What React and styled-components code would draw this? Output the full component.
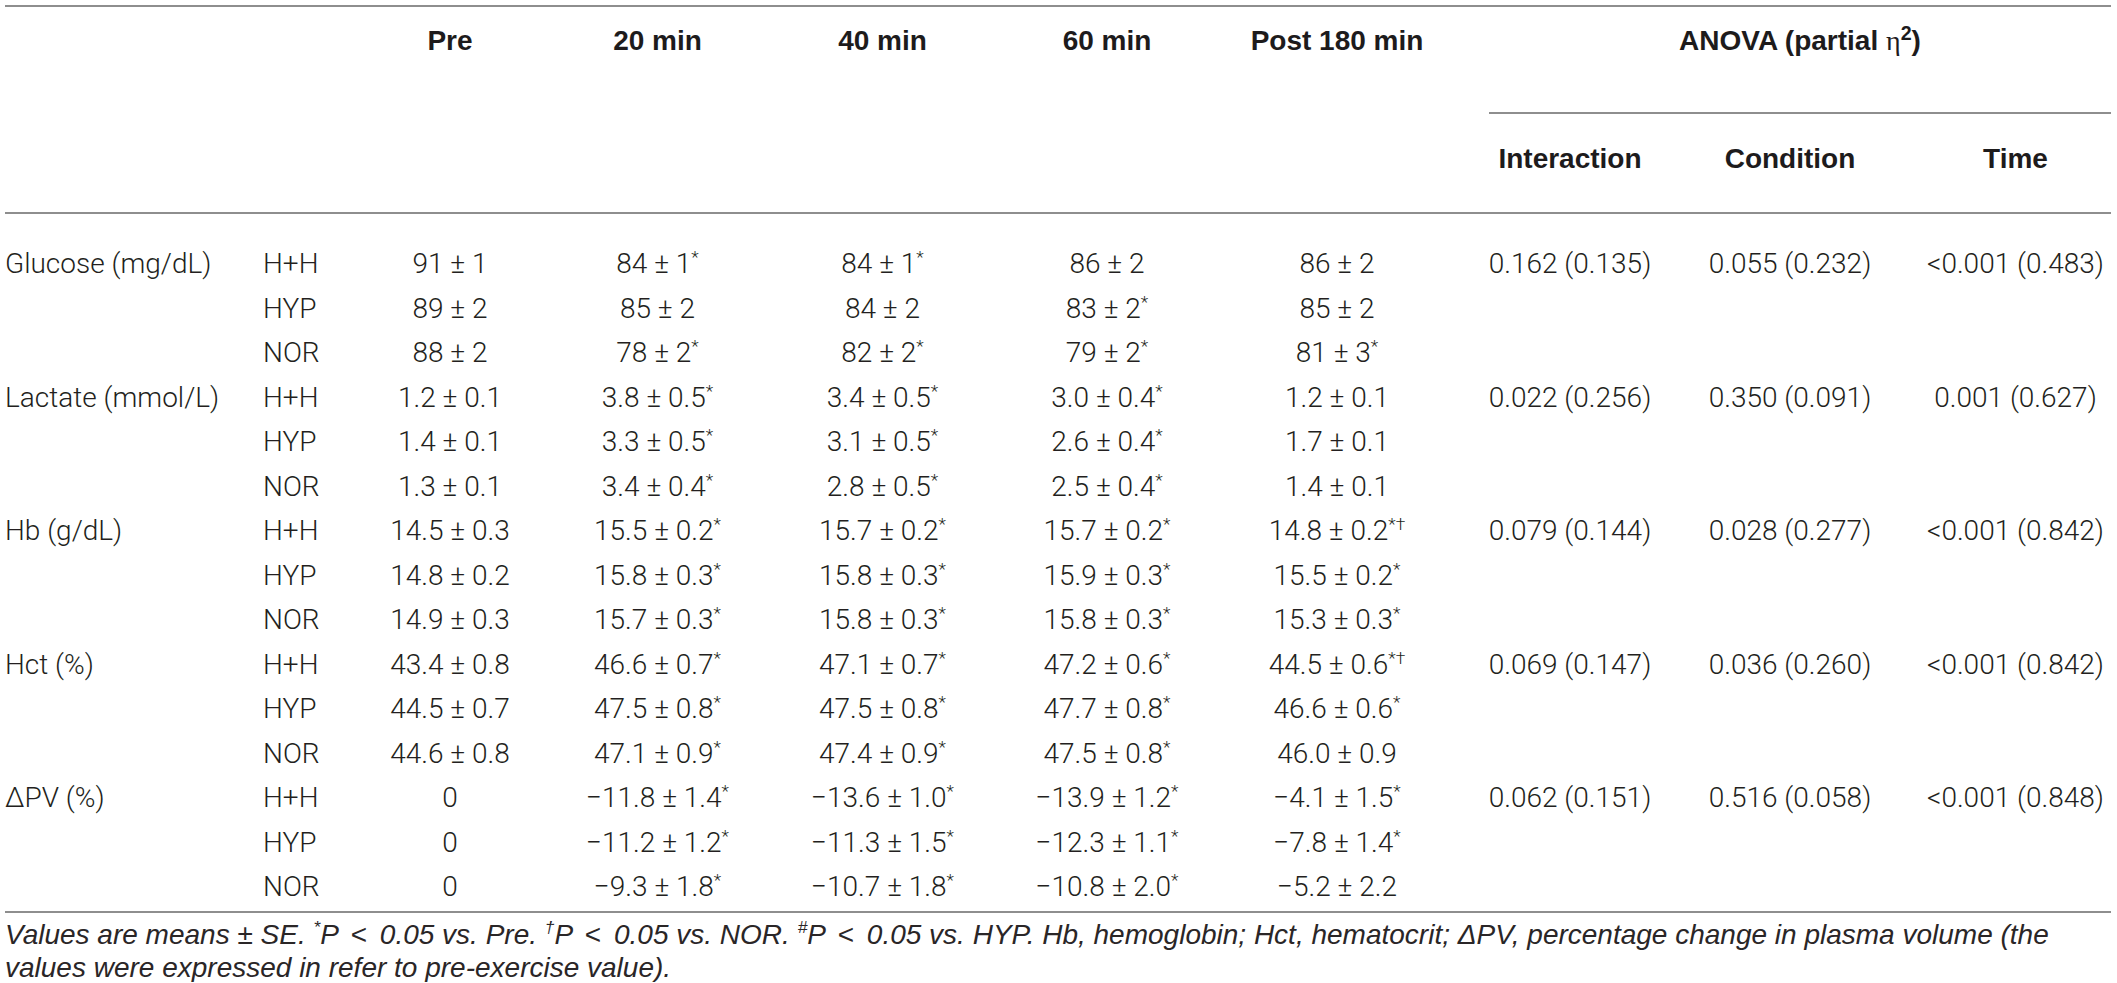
import React from 'react'
import styled, { createGlobalStyle } from 'styled-components'

const GlobalStyle = createGlobalStyle`
html, body {
  margin: 0;
  padding: 0;
  background: #ffffff;
}
body {
  font-family: Roboto, "Liberation Sans", Arial, sans-serif;
  color: #231f20;
}
`

const columns = [258, 87, 200, 215, 235, 214, 246, 220, 220, 211]
const times = ['Pre', '20 min', '40 min', '60 min', 'Post 180 min']

const measures = [
  {
    label: 'Glucose (mg/dL)',
    anova: ['0.162 (0.135)', '0.055 (0.232)', '<0.001 (0.483)'],
    groups: [
      ['H+H', ['91 ± 1', '84 ± 1*', '84 ± 1*', '86 ± 2', '86 ± 2']],
      ['HYP', ['89 ± 2', '85 ± 2', '84 ± 2', '83 ± 2*', '85 ± 2']],
      ['NOR', ['88 ± 2', '78 ± 2*', '82 ± 2*', '79 ± 2*', '81 ± 3*']],
    ],
  },
  {
    label: 'Lactate (mmol/L)',
    anova: ['0.022 (0.256)', '0.350 (0.091)', '0.001 (0.627)'],
    groups: [
      ['H+H', ['1.2 ± 0.1', '3.8 ± 0.5*', '3.4 ± 0.5*', '3.0 ± 0.4*', '1.2 ± 0.1']],
      ['HYP', ['1.4 ± 0.1', '3.3 ± 0.5*', '3.1 ± 0.5*', '2.6 ± 0.4*', '1.7 ± 0.1']],
      ['NOR', ['1.3 ± 0.1', '3.4 ± 0.4*', '2.8 ± 0.5*', '2.5 ± 0.4*', '1.4 ± 0.1']],
    ],
  },
  {
    label: 'Hb (g/dL)',
    anova: ['0.079 (0.144)', '0.028 (0.277)', '<0.001 (0.842)'],
    groups: [
      ['H+H', ['14.5 ± 0.3', '15.5 ± 0.2*', '15.7 ± 0.2*', '15.7 ± 0.2*', '14.8 ± 0.2*†']],
      ['HYP', ['14.8 ± 0.2', '15.8 ± 0.3*', '15.8 ± 0.3*', '15.9 ± 0.3*', '15.5 ± 0.2*']],
      ['NOR', ['14.9 ± 0.3', '15.7 ± 0.3*', '15.8 ± 0.3*', '15.8 ± 0.3*', '15.3 ± 0.3*']],
    ],
  },
  {
    label: 'Hct (%)',
    anova: ['0.069 (0.147)', '0.036 (0.260)', '<0.001 (0.842)'],
    groups: [
      ['H+H', ['43.4 ± 0.8', '46.6 ± 0.7*', '47.1 ± 0.7*', '47.2 ± 0.6*', '44.5 ± 0.6*†']],
      ['HYP', ['44.5 ± 0.7', '47.5 ± 0.8*', '47.5 ± 0.8*', '47.7 ± 0.8*', '46.6 ± 0.6*']],
      ['NOR', ['44.6 ± 0.8', '47.1 ± 0.9*', '47.4 ± 0.9*', '47.5 ± 0.8*', '46.0 ± 0.9']],
    ],
  },
  {
    label: 'ΔPV (%)',
    anova: ['0.062 (0.151)', '0.516 (0.058)', '<0.001 (0.848)'],
    groups: [
      ['H+H', ['0', '−11.8 ± 1.4*', '−13.6 ± 1.0*', '−13.9 ± 1.2*', '−4.1 ± 1.5*']],
      ['HYP', ['0', '−11.2 ± 1.2*', '−11.3 ± 1.5*', '−12.3 ± 1.1*', '−7.8 ± 1.4*']],
      ['NOR', ['0', '−9.3 ± 1.8*', '−10.7 ± 1.8*', '−10.8 ± 2.0*', '−5.2 ± 2.2']],
    ],
  },
]

const Value = ({ text }) => {
  const [, main, marks] = text.match(/^(.*?)([*†#]*)$/)
  return (
    <>
      {main}
      {marks && <Sup>{marks}</Sup>}
    </>
  )
}

const App = () => {
  return (
    <Page>
      <GlobalStyle />
      <Table>
        <colgroup>
          {columns.map((w, i) => (
            <col key={i} style={{ width: w }} />
          ))}
        </colgroup>
        <thead>
          <tr>
            <HeadCell rowSpan={2} />
            <HeadCell rowSpan={2} />
            {times.map((t) => (
              <HeadCell key={t} rowSpan={2}>{t}</HeadCell>
            ))}
            <GroupHead colSpan={3}>
              <GroupTitle>
                ANOVA (partial <Eta>η</Eta><HeadSup>2</HeadSup>)
              </GroupTitle>
            </GroupHead>
          </tr>
          <tr>
            <SubHead>Interaction</SubHead>
            <SubHead>Condition</SubHead>
            <SubHead $shift>Time</SubHead>
          </tr>
        </thead>
        <tbody>
          {measures.map((m, mi) =>
            m.groups.map(([group, values], gi) => (
              <Row key={m.label + group} $first={mi === 0 && gi === 0}>
                <LabelCell>{gi === 0 ? m.label : ''}</LabelCell>
                <LabelCell>{group}</LabelCell>
                {values.map((v, vi) => (
                  <Cell key={vi}>
                    <Value text={v} />
                  </Cell>
                ))}
                {m.anova.map((a, ai) => (
                  <Cell key={'a' + ai} $shift={ai === 2}>
                    {gi === 0 ? a : ''}
                  </Cell>
                ))}
              </Row>
            ))
          )}
        </tbody>
      </Table>
      <Footnote>
        Values are means ± SE. <FootSup>*</FootSup>P <Lt>&lt;</Lt> 0.05 vs. Pre.{' '}
        <FootSup>†</FootSup>P <Lt>&lt;</Lt> 0.05 vs. NOR. <FootSup>#</FootSup>P{' '}
        <Lt>&lt;</Lt> 0.05 vs. HYP. Hb, hemoglobin; Hct, hematocrit; ΔPV, percentage change
        in plasma volume (the values were expressed in refer to pre-exercise value).
      </Footnote>
    </Page>
  )
}

export default App

const Page = styled.div`
width: 2106px;
padding: 5px 0 0 5px;
`

const Table = styled.table`
width: 2106px;
table-layout: fixed;
border-collapse: collapse;
border-top: 2px solid #8e8e8e;
font-size: 28px;
font-weight: 300;
`

const HeadCell = styled.th`
padding: 18px 0 0;
vertical-align: top;
text-align: center;
font-family: "Liberation Sans", Arial, sans-serif;
font-weight: 700;
font-size: 28px;
line-height: 32px;
color: #1d1b1c;
border-bottom: 2px solid #8e8e8e;
`

const GroupHead = styled.th`
padding: 0;
height: 107px;
vertical-align: top;
font-family: "Liberation Sans", Arial, sans-serif;
font-weight: 700;
font-size: 28px;
line-height: 32px;
color: #1d1b1c;
`

const GroupTitle = styled.div`
margin-left: 29px;
height: 87px;
padding-top: 18px;
text-align: center;
border-bottom: 2px solid #8e8e8e;
`

const Eta = styled.span`
font-family: "Liberation Serif", "Times New Roman", serif;
font-weight: 400;
`

const HeadSup = styled.sup`
font-size: 0.7em;
line-height: 0;
`

const SubHead = styled.th`
height: 90px;
padding: 0 0 8px ${(p) => (p.$shift ? '20px' : '0')};
vertical-align: middle;
text-align: center;
font-family: "Liberation Sans", Arial, sans-serif;
font-weight: 700;
font-size: 28px;
color: #1d1b1c;
border-bottom: 2px solid #8e8e8e;
`

const Row = styled.tr`
& > td {
  height: 44.5px;
  padding-top: ${(p) => (p.$first ? '28px' : '0')};
}
&:last-child > td {
  padding-bottom: 1px;
}
`

const Cell = styled.td`
padding: 0 0 0 ${(p) => (p.$shift ? '20px' : '0')};
text-align: center;
white-space: nowrap;
line-height: 32px;
`

const LabelCell = styled.td`
padding: 0;
text-align: left;
white-space: nowrap;
line-height: 32px;
`

const Sup = styled.sup`
font-size: 0.62em;
line-height: 0;
vertical-align: 0.55em;
`

const FootSup = styled.span`
font-size: 0.62em;
position: relative;
top: -0.6em;
`

const Lt = styled.span`
margin: 0 5px;
font-style: normal;
`

const Footnote = styled.p`
width: 2106px;
margin: 0;
padding-top: 7px;
border-top: 2px solid #8e8e8e;
font-family: "Liberation Sans", Arial, sans-serif;
font-size: 28px;
font-style: italic;
font-weight: 400;
line-height: 29px;
color: #2a2627;
`
